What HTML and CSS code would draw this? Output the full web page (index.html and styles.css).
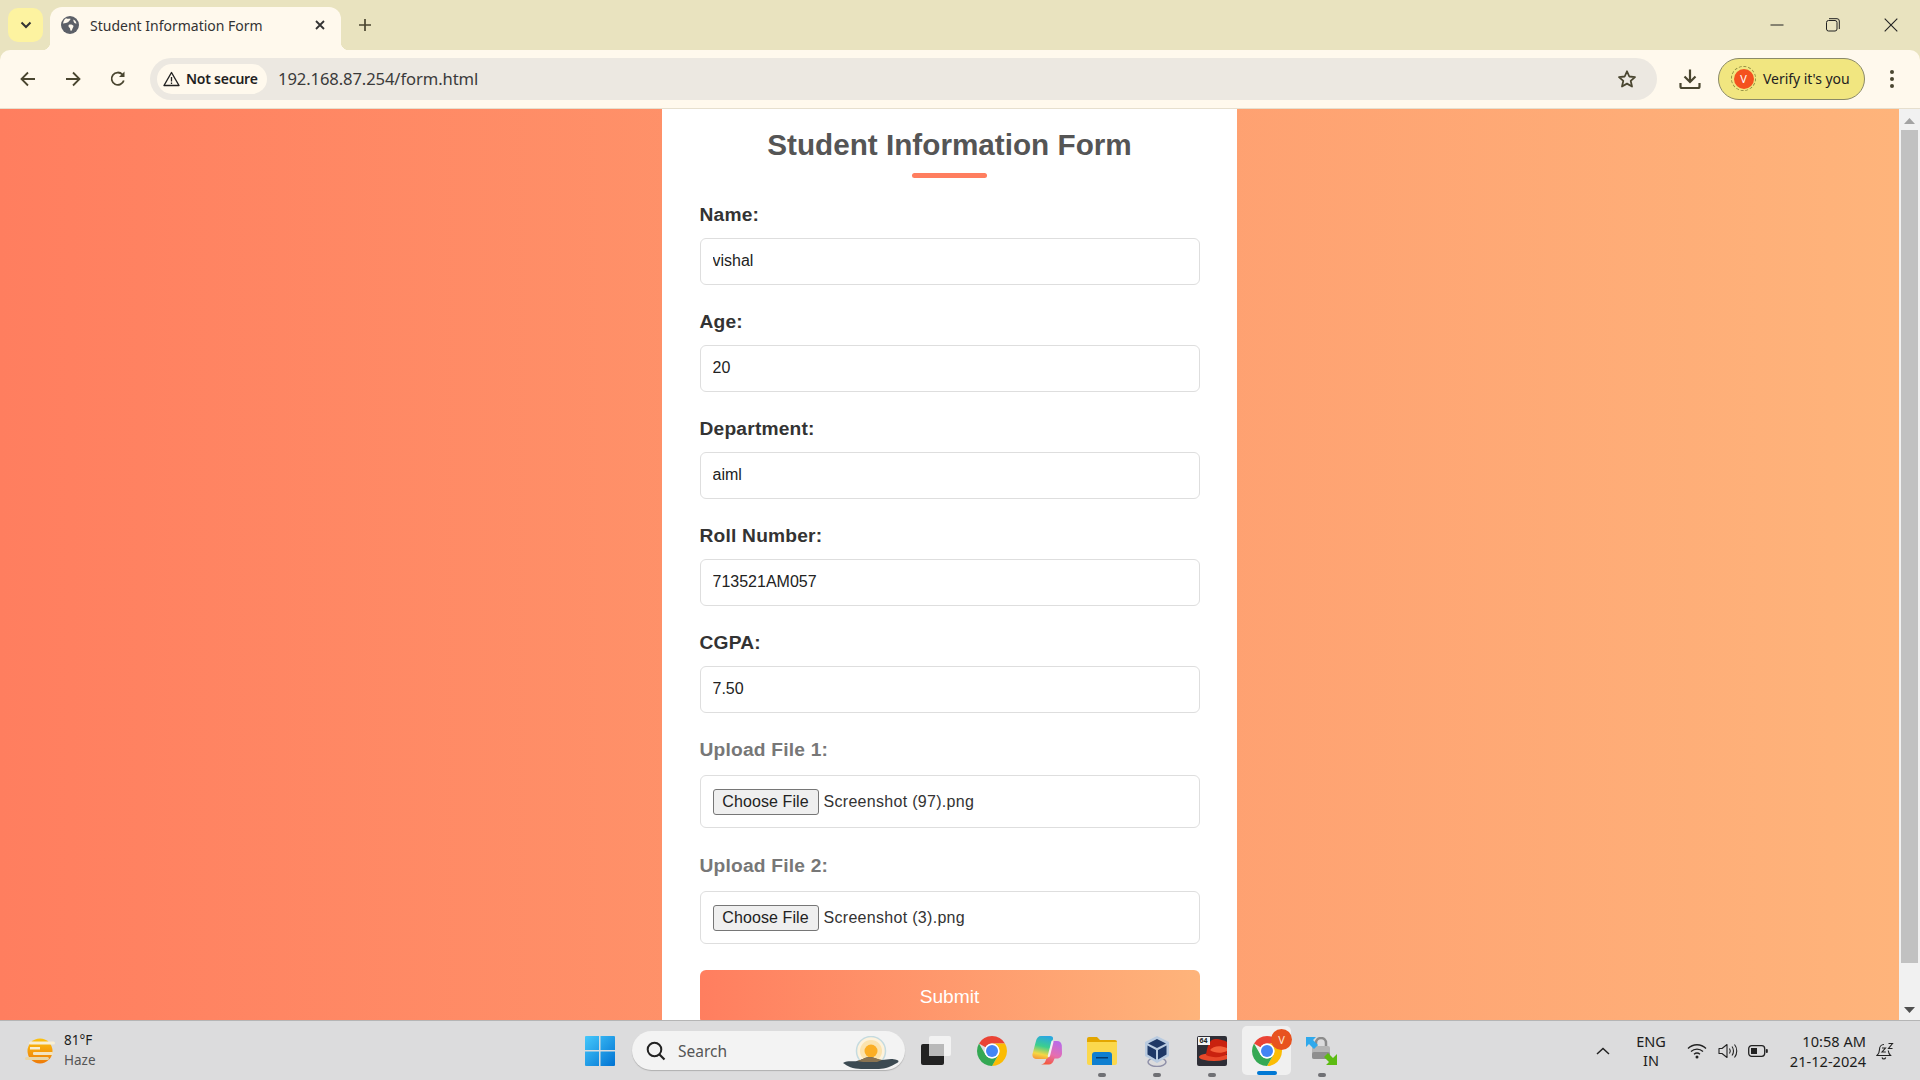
FILE: index.html
```html
<!DOCTYPE html>
<html lang="en">
<head>
<meta charset="utf-8">
<title>Student Information Form</title>
<link rel="stylesheet" href="styles.css">
</head>
<body>
<svg class="defs" width="0" height="0" aria-hidden="true">
  <symbol id="chrome" viewBox="4 4 40 40">
    <path fill="#ea4335" d="M24 4a20 20 0 0 1 17.32 10H24a10 10 0 0 0-8.66 5L6.68 14A20 20 0 0 1 24 4z"/>
    <path fill="#fbbc04" d="M41.32 14A20 20 0 0 1 24 44l8.66-15A10 10 0 0 0 24 14z"/>
    <path fill="#34a853" d="M24 44A20 20 0 0 1 6.68 14l8.66 15a10 10 0 0 0 17.32 0z"/>
    <circle cx="24" cy="24" r="10" fill="#fff"/>
    <circle cx="24" cy="24" r="8" fill="#4285f4"/>
  </symbol>
  <linearGradient id="cpA" x1="0.6" y1="0" x2="0.4" y2="1"><stop offset="0" stop-color="#2aa7e0"/><stop offset=".45" stop-color="#3ccf8e"/><stop offset=".8" stop-color="#f6d743"/><stop offset="1" stop-color="#f6a03a"/></linearGradient>
  <linearGradient id="cpB" x1="0.7" y1="0" x2="0.3" y2="1"><stop offset="0" stop-color="#b96ae8"/><stop offset=".55" stop-color="#e66fb0"/><stop offset="1" stop-color="#f4583a"/></linearGradient>
  <linearGradient id="winG" x1="0" y1="0" x2="1" y2="1"><stop offset="0" stop-color="#45c8fb"/><stop offset="1" stop-color="#0072d2"/></linearGradient>
  <linearGradient id="sunG" x1="0" y1="0" x2="0" y2="1"><stop offset="0" stop-color="#fcc20f"/><stop offset="1" stop-color="#ee7a08"/></linearGradient>
</svg>

<div class="tabstrip">
  <button class="tabsearch" type="button" aria-label="Search tabs">
    <svg width="12" height="8" viewBox="0 0 12 8"><path d="M1.500 1.500 6 6l4.500-4.500" fill="none" stroke="#333" stroke-width="2"/></svg>
  </button>
  <div class="tab">
    <svg class="favicon" width="18" height="18" viewBox="0 0 18 18">
      <circle cx="9" cy="9" r="9" fill="#5c6068"/>
      <path fill="#fff9ed" d="M5 2.200c1.500.8 3 .6 4.200.3.600 1-.2 2-1.200 2.400-.4 1.200-1.500 1.400-2.300 1.800-1 .5-2.400.3-3.500 1C2 5.500 3.200 3.400 5 2.200zM8.500 8.500c1.500-.3 3 .2 3.800 1.100.5.900-.2 2-.8 2.800-.4.800-.5 2-1.500 2.600-.8-.5-.8-1.800-1-2.700-.6-.6-1.500-1.300-1.500-2.300 0-.7.200-1.300 1-1.500zM12.500 3.500c1.500.7 2.700 2.300 3 4-1 0-2-.3-2.500-1.300-.4-.8-.8-1.700-.5-2.700z"/>
    </svg>
    <span class="tabtitle">Student Information Form</span>
    <svg class="tabclose" width="10" height="10" viewBox="0 0 10 10"><path d="M1 1l8 8M9 1 1 9" stroke="#333" stroke-width="1.800" fill="none"/></svg>
  </div>
  <svg class="newtab" width="14" height="14" viewBox="0 0 14 14"><path d="M7 1v12M1 7h12" stroke="#4a4630" stroke-width="1.700" fill="none"/></svg>
  <div class="wincontrols">
    <svg width="14" height="14" viewBox="0 0 14 14"><path d="M.5 7h13" stroke="#222" stroke-width="1"/></svg>
    <svg width="14" height="14" viewBox="0 0 14 14"><rect x=".5" y="2.500" width="10.500" height="10.500" rx="2" fill="none" stroke="#222"/><path d="M3 .7h8a2.300 2.300 0 0 1 2.300 2.300v8" fill="none" stroke="#222"/></svg>
    <svg width="14" height="14" viewBox="0 0 14 14"><path d="M.7.7l12.600 12.600M13.300.7.7 13.300" stroke="#222" stroke-width="1.100" fill="none"/></svg>
  </div>
</div>

<div class="toolbar">
  <svg class="navicon" width="18" height="18" viewBox="0 0 18 18"><path d="M16 9H3M9 2.500 2.500 9 9 15.500" fill="none" stroke="#4a4630" stroke-width="1.800"/></svg>
  <svg class="navicon" width="18" height="18" viewBox="0 0 18 18"><path d="M2 9h13M9 2.500 15.500 9 9 15.500" fill="none" stroke="#4a4630" stroke-width="1.800"/></svg>
  <svg class="navicon" width="18" height="18" viewBox="0 0 18 18"><path d="M14.800 10.500A6.200 6.200 0 1 1 13.400 4.500" fill="none" stroke="#4a4630" stroke-width="1.800"/><path d="M15.500 1.500v5.500H10z" fill="#4a4630"/></svg>
  <div class="omnibox">
    <div class="chip">
      <svg width="17" height="16" viewBox="0 0 17 16"><path d="M8.500 1.500 16 14.500H1z" fill="none" stroke="#222" stroke-width="1.400" stroke-linejoin="round"/><path d="M8.500 6v4.500M8.500 11.500v1.500" stroke="#222" stroke-width="1.300"/></svg>
      <span class="chiptext">Not secure</span>
    </div>
    <span class="url">192.168.87.254/form.html</span>
    <svg class="star" width="20" height="20" viewBox="0 0 20 20"><path d="M10 2.300l2.300 5.200 5.700.6-4.300 3.800 1.300 5.600-5-2.900-5 2.900 1.300-5.600L2 8.100l5.700-.6z" fill="none" stroke="#4a4630" stroke-width="1.800" stroke-linejoin="round"/></svg>
  </div>
  <svg class="download" width="22" height="22" viewBox="0 0 22 22"><path d="M11 1.500v12M5.500 8.500 11 14l5.500-5.500" fill="none" stroke="#4a4630" stroke-width="2.200"/><path d="M1.500 15v3.500a1.500 1.500 0 0 0 1.500 1.500h16a1.500 1.500 0 0 0 1.500-1.500V15" fill="none" stroke="#4a4630" stroke-width="2.200"/></svg>
  <div class="verify">
    <span class="avatarring"><span class="avatar">V</span></span>
    <span class="verifytext">Verify it's you</span>
  </div>
  <svg class="kebab" width="6" height="20" viewBox="0 0 6 20"><circle cx="3" cy="3" r="2" fill="#4a4630"/><circle cx="3" cy="10" r="2" fill="#4a4630"/><circle cx="3" cy="17" r="2" fill="#4a4630"/></svg>
</div>

<div class="viewport">
  <main class="page">
    <form class="card">
      <h1 class="title">Student Information Form</h1>
      <div class="title-rule"></div>
      <div class="group"><label class="label">Name:</label><input class="field" type="text" value="vishal"></div>
      <div class="group"><label class="label">Age:</label><input class="field" type="text" value="20"></div>
      <div class="group"><label class="label">Department:</label><input class="field" type="text" value="aiml"></div>
      <div class="group"><label class="label">Roll Number:</label><input class="field" type="text" value="713521AM057"></div>
      <div class="group"><label class="label">CGPA:</label><input class="field" type="text" value="7.50"></div>
      <div class="group group-file"><label class="label label-file">Upload File 1:</label>
        <div class="filebox"><button class="filebtn" type="button">Choose File</button><span class="filename">Screenshot (97).png</span></div>
      </div>
      <div class="group"><label class="label label-file">Upload File 2:</label>
        <div class="filebox"><button class="filebtn" type="button">Choose File</button><span class="filename">Screenshot (3).png</span></div>
      </div>
      <button class="submit" type="button">Submit</button>
    </form>
  </main>
  <div class="scrollbar">
    <svg class="sbarrow" width="11" height="6" viewBox="0 0 11 6"><path d="M5.500 0 11 6H0z" fill="#a3a3a3"/></svg>
    <div class="sbthumb"></div>
    <svg class="sbarrow" width="11" height="6" viewBox="0 0 11 6"><path d="M0 0h11L5.500 6z" fill="#505050"/></svg>
  </div>
</div>

<footer class="taskbar">
  <div class="weather">
    <svg width="30" height="28" viewBox="0 0 30 28">
      <circle cx="15" cy="14" r="12.500" fill="url(#sunG)"/>
      <rect x="4" y="4.500" width="26" height="3" rx="1.500" fill="#f8efd4"/>
      <rect x="5" y="10" width="10" height="2.500" fill="#f8efd4"/>
      <rect x="8" y="15" width="20" height="3" rx="1" fill="#f3e4c0"/>
      <rect x="0" y="20" width="24" height="3" rx="1.500" fill="#e8d6a8"/>
    </svg>
    <div class="weathertext"><span class="temp">81°F</span><span class="haze">Haze</span></div>
  </div>
  <svg class="winlogo" width="30" height="30" viewBox="0 0 30 30">
    <path fill="url(#winG)" d="M1 0h13v14H0V1a1 1 0 0 1 1-1zM15.500 0H29a1 1 0 0 1 1 1v13H15.500zM0 15.500h14V30H1a1 1 0 0 1-1-1zM15.500 15.500H30V29a1 1 0 0 1-1 1H15.500z"/>
  </svg>
  <div class="search">
    <svg width="20" height="20" viewBox="0 0 20 20"><circle cx="8.500" cy="8.500" r="6.800" fill="none" stroke="#222" stroke-width="2"/><path d="M13.500 13.500 18.500 18.500" stroke="#222" stroke-width="2.200"/></svg>
    <span class="searchtext">Search</span>
    <svg class="searchart" width="56" height="34" viewBox="0 0 56 34">
      <circle cx="28" cy="15" r="14.500" fill="#fdf2dc" stroke="#c5dbe0" stroke-width="1.500"/>
      <circle cx="28" cy="15" r="11" fill="#fbe3ae"/>
      <circle cx="28" cy="15" r="6.500" fill="#fbae24"/>
      <path d="M0 27c5-3 10-1 14-2 5-1 8-4 13-4 4 0 8 3 12 3 5 0 8-2 15 0 2 .5 2 2 0 3-5 3-12 6-18 6H18C10 33 4 30 0 27z" fill="#3c4a52"/>
      <path d="M14 25c5-1 8-4 13-4 4 0 8 3 12 3l-5 2H20z" fill="#8a7350"/>
    </svg>
  </div>
  <svg class="taskview" width="30" height="30" viewBox="0 0 30 30">
    <rect x="0" y="8" width="23" height="21" rx="2" fill="#222"/>
    <rect x="8" y="0" width="22" height="20" rx="2" fill="#f2f2f2"/>
    <rect x="8" y="8" width="15" height="12" fill="#b9b9b9"/>
  </svg>
  <div class="apps">
    <div class="app"><svg class="appicon" width="30" height="30"><use href="#chrome"/></svg></div>
    <div class="app">
      <svg class="appicon" width="30" height="29" viewBox="0 0 30 29">
        <path fill="url(#cpB)" d="M21 5h4c3 0 4.500 2 4.800 4.500l.2 8c0 3-2.500 5-5 5h-2.500l-1 2.500c-1 2-2.500 3.500-4.500 3.500H9c2.500-.5 4-1.500 4.500-3.500z"/>
        <path fill="url(#cpA)" d="M9 0h9c2 0 3.500 1 3 3L17 20c-.5 2-2 3-3.500 3H5c-3 0-5-2-4.500-5L4 5C4.500 2 6.500 0 9 0z"/>
        <path fill="#f4eff2" d="M19.500 5c1-1 2.300-.5 2 1l-3.500 14c-.4 1.500-2.500 1.500-2.300 0z"/>
      </svg>
    </div>
    <div class="app has-dot">
      <svg class="appicon" width="30" height="28" viewBox="0 0 30 28">
        <path fill="#e3a600" d="M0 2a2 2 0 0 1 2-2h8l3 3h15a2 2 0 0 1 2 2v4H0z"/>
        <path fill="#fbd84d" d="M0 5h30v21a2 2 0 0 1-2 2H2a2 2 0 0 1-2-2z"/>
        <path fill="#0f7fd0" d="M5 18a3 3 0 0 1 3-3h14a3 3 0 0 1 3 3v10H5z"/>
        <rect x="9" y="20" width="12" height="1.500" fill="#083c6e"/>
      </svg>
    </div>
    <div class="app has-dot">
      <svg class="appicon" width="26" height="32" viewBox="0 0 26 32">
        <ellipse cx="13" cy="27" rx="9" ry="4.500" fill="none" stroke="#8f90a8" stroke-width="1.500"/>
        <path fill="#b9cbe0" d="M13 1 25 7v14l-12 7L1 21V7z"/>
        <path fill="#1e3866" d="M13 4 22 8.500 13 13 4 8.500zM3.500 10.500l8.500 4.500v9.500l-8.500-5zM22.500 10.500 14 15v9.500l8.500-5z"/>
      </svg>
    </div>
    <div class="app has-dot">
      <div class="redbox">
        <span class="red64">64</span>
        <svg class="redart" width="30" height="30" viewBox="0 0 30 30">
          <ellipse cx="17" cy="21" rx="15" ry="4" fill="#e8492a"/>
          <path d="M9 19C10 12 12 3 18 3c6 0 10 2 12 3v12c-5 4-15 4-21 1z" fill="#c9220f"/>
          <path d="M13 14c3-4 10-5 17-2v3c-6 3-13 2-17-1z" fill="#f4603a"/>
        </svg>
      </div>
    </div>
    <div class="app app-active">
      <svg class="appicon" width="30" height="30"><use href="#chrome"/></svg>
      <span class="appbadge">V</span>
      <span class="activebar"></span>
    </div>
    <div class="app has-dot">
      <svg class="appicon" width="31" height="28" viewBox="0 0 31 28">
        <path d="M10 9V6a5 5 0 0 1 10 0v3" fill="none" stroke="#8c8c8c" stroke-width="2.500"/>
        <rect x="6" y="9" width="18" height="13" rx="2" fill="#b5b5b5"/>
        <rect x="6" y="15" width="18" height="7" rx="2" fill="#8e8e8e"/>
        <path d="M0 0h10L7 3l5 5-4 4-5-5-3 3z" fill="#2fa9ec"/>
        <path d="M31 28H20l3-3-5-5 4-4 5 5 4-4z" fill="#5cbb12"/>
      </svg>
    </div>
  </div>
  <div class="tray">
    <svg class="traychevron" width="14" height="8" viewBox="0 0 14 8"><path d="M1 7 7 1.500 13 7" fill="none" stroke="#222" stroke-width="1.500"/></svg>
    <div class="lang"><span>ENG</span><span>IN</span></div>
    <svg class="tray-wifi" width="20" height="16" viewBox="0 0 20 16"><path d="M1 5.500c5-5 13-5 18 0M4 8.500c3.500-3.300 8.500-3.300 12 0M7 11.300c2-1.700 4-1.700 6 0" fill="none" stroke="#222" stroke-width="1.300"/><circle cx="10" cy="14" r="1.500" fill="#222"/></svg>
    <svg class="tray-vol" width="21" height="16" viewBox="0 0 21 16"><path d="M1 5.500h3L9 1.500v13L4 10.500H1z" fill="none" stroke="#222" stroke-width="1.100" stroke-linejoin="round"/><path d="M11.500 5.500c1 1.500 1 3.500 0 5M14 3.500c2 2.500 2 6.500 0 9M16.500 1.500c3 3.500 3 9.500 0 13" fill="none" stroke="#222" stroke-width="1.100"/></svg>
    <svg class="tray-batt" width="20" height="12" viewBox="0 0 20 12"><rect x=".7" y=".7" width="16" height="10.600" rx="3" fill="none" stroke="#222" stroke-width="1.300"/><rect x="3" y="3" width="6" height="6" fill="#222"/><rect x="17.800" y="4" width="2" height="4" rx="1" fill="#222"/></svg>
    <div class="clock"><span>10:58 AM</span><span>21-12-2024</span></div>
    <svg class="bell" width="19" height="20" viewBox="0 0 19 20"><path d="M8 3.500C5 3.500 3.500 6 3.500 8.500c0 3-1 4.500-2.500 6h13.500c-1.500-1.500-2-3-2.300-5" fill="none" stroke="#222" stroke-width="1.100"/><path d="M6 16.500c.7 2 3 2 3.700 0" fill="none" stroke="#222" stroke-width="1.100"/><path d="M6 7h3.500L6 11h3.800M12.500 2.500h4L12.500 7.500h4" fill="none" stroke="#222" stroke-width="1.100"/></svg>
  </div>
</footer>
</body>
</html>
```
FILE: styles.css
```css
* { box-sizing: border-box; }
html, body { height: 100%; margin: 0; }
body {
  display: flex;
  flex-direction: column;
  height: 100vh;
  overflow: hidden;
  font-family: "Noto Sans", "Liberation Sans", sans-serif;
  background: #e9e3bf;
}
.defs { position: absolute; }

/* Browser chrome */
.tabstrip {
  flex: 0 0 50px;
  display: flex;
  align-items: flex-end;
  background: #e9e3bf;
  padding-left: 8px;
}
.tabsearch {
  width: 35px;
  height: 34px;
  margin: 0 7px 8px 0;
  padding: 0;
  border: 0;
  border-radius: 10px;
  background: #fdf3a0;
  display: flex;
  align-items: center;
  justify-content: center;
}
.tab {
  position: relative;
  width: 291px;
  height: 43px;
  display: flex;
  align-items: center;
  padding: 0 16px 7px 11px;
  background: #fff9ed;
  border-radius: 12px 12px 0 0;
}
.tab::before, .tab::after {
  content: "";
  position: absolute;
  bottom: 0;
  width: 8px;
  height: 8px;
}
.tab::before { left: -8px; background: radial-gradient(circle at 0 0, transparent 8px, #fff9ed 8.500px); }
.tab::after { right: -8px; background: radial-gradient(circle at 100% 0, transparent 8px, #fff9ed 8.500px); }
.favicon { flex: none; }
.tabtitle {
  flex: 1;
  margin-left: 11px;
  font-size: 14px;
  color: #333;
  white-space: nowrap;
}
.tabclose { flex: none; }
.newtab { flex: none; margin: 0 0 18px 17px; }
.wincontrols {
  flex: 1;
  margin-bottom: 18px;
  padding-right: 22px;
  display: flex;
  gap: 42px;
  justify-content: flex-end;
}
.wincontrols svg:last-child { margin-left: 2px; }
.toolbar {
  flex: 0 0 59px;
  display: flex;
  align-items: center;
  background: #fff9ed;
  border-radius: 10px 10px 0 0;
  border-bottom: 1px solid #e6dfce;
  padding: 0 0 1px 19px;
}
.navicon { flex: none; margin-right: 27px; }
.navicon:nth-child(3) { margin-right: 23px; }
.omnibox {
  width: 1507px;
  height: 42px;
  display: flex;
  align-items: center;
  padding: 0 20px 0 7px;
  background: #ece8e1;
  border-radius: 21px;
}
.chip {
  width: 110px;
  height: 30px;
  display: flex;
  align-items: center;
  gap: 6px;
  padding-left: 6px;
  background: #fff9ed;
  border-radius: 15px;
}
.chiptext {
  font-size: 14px;
  font-weight: 600;
  letter-spacing: -.25px;
  color: #1f1f1f;
  white-space: nowrap;
}
.url {
  flex: 1;
  margin-left: 11px;
  font-size: 16.600px;
  letter-spacing: -.1px;
  color: #3a3a3a;
  white-space: nowrap;
}
.star { flex: none; }
.download { flex: none; margin-left: 22px; }
.verify {
  width: 147px;
  height: 42px;
  margin-left: 17px;
  display: flex;
  align-items: center;
  gap: 7px;
  padding-left: 12px;
  background: #f1e680;
  border: 1px solid #8b8a68;
  border-radius: 21px;
}
.avatarring {
  width: 25px;
  height: 25px;
  flex: none;
  display: flex;
  align-items: center;
  justify-content: center;
  border: 1.500px dashed #8d8a40;
  border-radius: 50%;
}
.avatar {
  width: 20px;
  height: 20px;
  display: flex;
  align-items: center;
  justify-content: center;
  border-radius: 50%;
  background: #f4511e;
  color: #fff;
  font-size: 11px;
}
.verifytext {
  font-size: 14px;
  letter-spacing: -.05px;
  color: #222;
  white-space: nowrap;
}
.kebab { flex: none; margin-left: 24px; }

/* Page */
.viewport {
  flex: 0 0 911px;
  display: flex;
  min-height: 0;
  overflow: hidden;
}
.page {
  flex: 1;
  min-width: 0;
  overflow: hidden;
  background: linear-gradient(to right, #ff7e5f, #feb47b);
  font-family: "Liberation Sans", Arial, sans-serif;
}
.card {
  width: 575px;
  margin: 0 auto;
  padding: 19px 37.500px 30px;
  background: #fff;
}
.title {
  margin: 0;
  font-size: 29.700px;
  line-height: 34px;
  font-weight: 700;
  text-align: center;
  color: #555;
}
.title-rule {
  width: 75px;
  height: 5px;
  margin: 11px auto 26px;
  background: #ff7e5f;
  border-radius: 3px;
}
.group { margin-bottom: 26px; }
.group-file { margin-bottom: 27px; }
.label {
  display: block;
  margin-bottom: 12px;
  font-size: 19.200px;
  line-height: 22px;
  font-weight: 700;
  letter-spacing: .2px;
  color: #333;
}
.label-file { margin-bottom: 14px; color: #777; }
.field {
  display: block;
  width: 100%;
  height: 47px;
  padding: 0 12px 2px;
  border: 1px solid #dedede;
  border-radius: 6px;
  background: #fff;
  font-family: inherit;
  font-size: 16px;
  color: #222;
  outline: 0;
}
.filebox {
  height: 53px;
  display: flex;
  align-items: center;
  padding-left: 12px;
  border: 1px solid #dedede;
  border-radius: 6px;
  background: #fff;
}
.filebtn {
  width: 106px;
  height: 26px;
  margin-right: 5px;
  padding: 0;
  border: 1px solid #767676;
  border-radius: 3px;
  background: #efefef;
  font-family: inherit;
  font-size: 16px;
  letter-spacing: .1px;
  color: #222;
}
.filename { font-size: 16px; letter-spacing: .3px; color: #333; white-space: nowrap; }
.submit {
  display: block;
  width: 100%;
  height: 54px;
  border: 0;
  border-radius: 6px;
  background: linear-gradient(to right, #ff7e5f, #feb47b);
  font-family: inherit;
  font-size: 19.200px;
  color: #fff;
}

/* Scrollbar */
.scrollbar {
  flex: 0 0 21px;
  display: flex;
  flex-direction: column;
  align-items: center;
  background: #f1f1f1;
  padding-top: 9px;
}
.sbarrow { flex: none; }
.sbthumb {
  width: 17px;
  height: 833px;
  margin: 6px 0 44px;
  background: #c1c1c1;
}

/* Taskbar */
.taskbar {
  flex: 0 0 60px;
  display: flex;
  align-items: center;
  background: #dcdcdd;
  border-top: 1px solid #b5b5b5;
  font-size: 14px;
  color: #1c1c1c;
}
.weather {
  flex: 0 0 585px;
  display: flex;
  align-items: center;
  gap: 9px;
  padding-left: 25px;
}
.weathertext { display: flex; flex-direction: column; margin-top: -2px; line-height: 20px; font-size: 13.500px; }
.haze { color: #555; }
.winlogo { flex: none; }
.search {
  flex: none;
  width: 273px;
  height: 39px;
  margin-left: 17px;
  display: flex;
  align-items: center;
  padding: 0 6px 0 14px;
  background: #f3f3f3;
  border-radius: 20px;
  box-shadow: 0 1px 1px #b0b0b0;
}
.searchtext { flex: 1; margin-left: 12px; font-size: 15.500px; color: #555; }
.searchart { flex: none; margin-top: 4px; }
.taskview { flex: none; margin-left: 16px; }
.apps { display: flex; flex: none; margin-left: 13px; }
.app {
  position: relative;
  width: 55px;
  height: 59px;
  display: flex;
  align-items: center;
  justify-content: center;
}
.has-dot::after {
  content: "";
  position: absolute;
  left: 50%;
  bottom: 3px;
  width: 8px;
  height: 4px;
  margin-left: -4px;
  border-radius: 2px;
  background: #6f7074;
}
.app-active::before {
  content: "";
  position: absolute;
  left: 3px;
  right: 3px;
  top: 5px;
  bottom: 5px;
  border-radius: 5px;
  background: #f0f0f0;
}
.appicon { position: relative; display: block; }
.appbadge {
  position: absolute;
  left: 32px;
  top: 8px;
  width: 21px;
  height: 21px;
  display: flex;
  align-items: center;
  justify-content: center;
  border-radius: 50%;
  background: #e8521f;
  color: #ffe7d0;
  font-size: 11px;
}
.activebar {
  position: absolute;
  left: 50%;
  bottom: 5px;
  width: 20px;
  height: 4px;
  margin-left: -10px;
  border-radius: 2px;
  background: #0078d4;
}
.redbox {
  position: relative;
  width: 30px;
  height: 30px;
  border-radius: 2px;
  background: #2e2e36;
  overflow: hidden;
}
.redart { display: block; }
.red64 {
  position: absolute;
  z-index: 1;
  left: 1px;
  top: 1px;
  padding: 0 2px;
  background: #f2f2f2;
  font-size: 7px;
  line-height: 8px;
  font-weight: 700;
  color: #222;
}
.tray {
  flex: 1;
  min-width: 0;
  display: flex;
  align-items: center;
}
.traychevron { flex: none; margin-left: 247px; }
.lang {
  flex: none;
  width: 40px;
  margin-left: 21px;
  display: flex;
  flex-direction: column;
  align-items: center;
  line-height: 19px;
  font-size: 14.500px;
}
.tray-wifi { flex: none; margin-left: 16px; }
.tray-vol { flex: none; margin-left: 10.500px; }
.tray-batt { flex: none; margin-left: 9.500px; }
.clock {
  flex: none;
  width: 90px;
  margin-left: 8px;
  display: flex;
  flex-direction: column;
  align-items: flex-end;
  line-height: 20px;
  font-size: 14.600px;
  white-space: nowrap;
}
.bell { flex: none; margin-left: 9.500px; }
```
